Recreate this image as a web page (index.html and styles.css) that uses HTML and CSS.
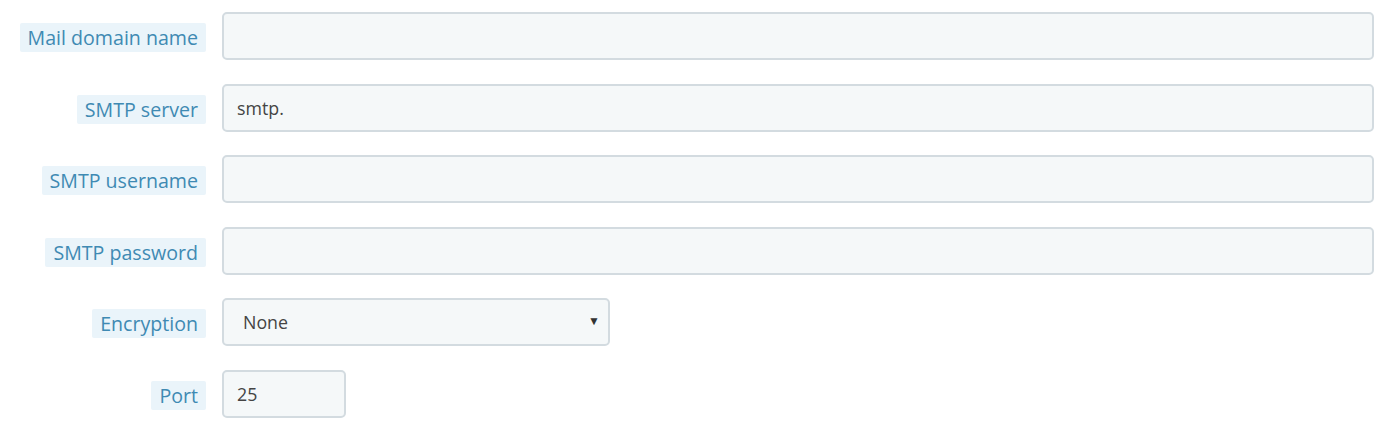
FILE: index.html
```html
<!DOCTYPE html>
<html>
<head>
<meta charset="utf-8">
<link rel="stylesheet" href="styles.css">
</head>
<body>
<form class="form">
  <div class="row">
    <div class="label-col"><label class="label">Mail domain name</label></div>
    <div class="field-col"><input class="input" type="text" value=""></div>
  </div>
  <div class="row">
    <div class="label-col"><label class="label">SMTP server</label></div>
    <div class="field-col"><input class="input" type="text" value="smtp."></div>
  </div>
  <div class="row">
    <div class="label-col"><label class="label">SMTP username</label></div>
    <div class="field-col"><input class="input" type="text" value=""></div>
  </div>
  <div class="row">
    <div class="label-col"><label class="label">SMTP password</label></div>
    <div class="field-col"><input class="input" type="password" value=""></div>
  </div>
  <div class="row">
    <div class="label-col"><label class="label">Encryption</label></div>
    <div class="field-col">
      <div class="select">
        <span class="select-value">None</span>
        <span class="select-arrow">&#9660;</span>
      </div>
    </div>
  </div>
  <div class="row">
    <div class="label-col"><label class="label">Port</label></div>
    <div class="field-col"><input class="input input-port" type="text" value="25"></div>
  </div>
</form>
</body>
</html>
```
FILE: styles.css
```css
html, body {
  margin: 0;
  padding: 0;
  background: #ffffff;
}
body {
  font-family: "Open Sans", "Liberation Sans", sans-serif;
}
.form {
  display: flex;
  flex-direction: column;
  gap: 23.6px;
  padding: 12px 14px 0 0;
}
.row {
  display: flex;
  align-items: center;
  gap: 16px;
  height: 48px;
}
.label-col {
  width: 206px;
  flex: none;
  display: flex;
  justify-content: flex-end;
  padding-top: 3px;
}
.label {
  background: #eaf4fa;
  color: #3f8ab3;
  font-size: 19.6px;
  line-height: 29px;
  padding: 0 8px;
  border-radius: 2px;
  white-space: nowrap;
}
.field-col {
  flex: 1;
  display: flex;
}
.input {
  box-sizing: border-box;
  width: 100%;
  height: 48px;
  background: #f5f8f9;
  border: 2px solid #d3dbe0;
  border-radius: 5px;
  padding: 0 13px;
  font-family: "Open Sans", "Liberation Sans", sans-serif;
  font-size: 17.8px;
  color: #444;
  outline: none;
}
.input-port {
  width: 124px;
}
.select {
  box-sizing: border-box;
  width: 388px;
  height: 48px;
  background: #f5f8f9;
  border: 2px solid #d3dbe0;
  border-radius: 5px;
  padding: 0 8px 0 19px;
  display: flex;
  align-items: center;
  justify-content: space-between;
  font-size: 17.8px;
  color: #444;
}
.select-arrow {
  font-size: 12px;
  color: #333;
  margin-top: -4px;
}
```
